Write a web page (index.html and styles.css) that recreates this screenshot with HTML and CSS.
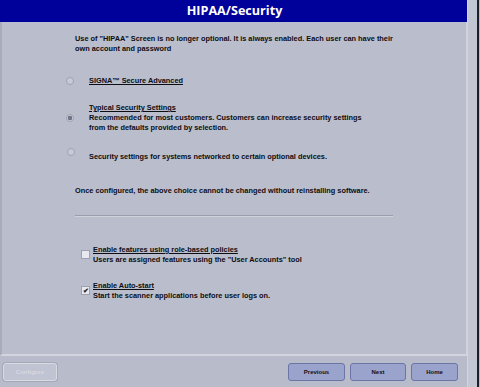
FILE: index.html
```html
<!DOCTYPE html>
<html>
<head>
<meta charset="utf-8">
<link rel="stylesheet" href="styles.css">
</head>
<body>
<div class="screen">
  <div class="main">
    <div class="title">HIPAA/Security</div>
    <div class="panel">
      <p class="intro">Use of "HIPAA" Screen is no longer optional. It is always enabled. Each user can have their<br>own account and password</p>

      <div class="opt opt1">
        <span class="radio"></span>
        <div class="otext"><span class="lbl">SIGNA™ Secure Advanced</span></div>
      </div>

      <div class="opt opt2">
        <span class="radio sel"></span>
        <div class="otext"><span class="lbl">Typical Security Settings</span><br>Recommended for most customers. Customers can increase security settings<br>from the defaults provided by selection.</div>
      </div>

      <div class="opt opt3">
        <span class="radio"></span>
        <div class="otext">Security settings for systems networked to certain optional devices.</div>
      </div>

      <p class="note">Once configured, the above choice cannot be changed without reinstalling software.</p>

      <div class="sep"></div>

      <div class="chk chk1">
        <span class="box"></span>
        <div class="ctext"><span class="lbl">Enable features using role-based policies</span><br>Users are assigned features using the "User Accounts" tool</div>
      </div>

      <div class="chk chk2">
        <span class="box on">✔</span>
        <div class="ctext"><span class="lbl">Enable Auto-start</span><br>Start the scanner applications before user logs on.</div>
      </div>
    </div>
    <div class="footer">
      <button class="btn dis">Configure</button>
      <div class="spacer"></div>
      <button class="btn nav prev">Previous</button>
      <button class="btn nav next">Next</button>
      <button class="btn nav home">Home</button>
    </div>
  </div>
  <div class="side"><div class="strip"></div><div class="line"></div></div>
</div>
</body>
</html>
```
FILE: styles.css
```css
html, body {
  margin: 0;
  padding: 0;
  background: #b8bbca;
}
.screen {
  width: 480px;
  height: 387px;
  display: flex;
  font-family: "Liberation Sans", Arial, sans-serif;
  font-weight: bold;
  font-size: 7.35px;
  color: #0d0d12;
  overflow: hidden;
}
.main {
  width: 467px;
  display: flex;
  flex-direction: column;
}
.title {
  height: 22px;
  background: #00009a;
  color: #fff;
  font-family: "Open Sans", "DejaVu Sans", sans-serif;
  font-size: 12.6px;
  font-weight: bold;
  display: flex;
  align-items: center;
  justify-content: center;
  padding-left: 2px;
}
.panel {
  height: 335px;
  box-sizing: border-box;
  background: #babdcc;
  border-left: 2px solid #a9acbb;
  border-right: 1px solid #d0d2dc;
  border-bottom: 2px solid #d2d4de;
  padding-left: 73px;
  padding-top: 12px;
  line-height: 10px;
}
.intro {
  margin: 0;
}
.opt {
  display: flex;
  margin-left: -9px;
}
.radio {
  width: 6px;
  height: 6px;
  border-radius: 50%;
  background: #c8cad6;
  border: 1px solid #9fa2b2;
  flex: none;
  margin-right: 9px;
}
.radio.sel {
  background: radial-gradient(circle, #707388 0 2px, #c8cad6 2.5px);
}
.lbl {
  text-decoration: underline;
}
.opt1 {
  margin-top: 22px;
  align-items: center;
}
.opt2 {
  margin-top: 17px;
}
.opt2 .radio {
  margin-top: 11px;
}
.opt3 {
  margin-top: 19px;
}
.opt3 .radio {
  margin-top: -4px;
  margin-left: 1px;
  margin-right: 8px;
}
.otext {
  margin-left: 6px;
}
.note {
  margin: 24px 0 0 0;
}
.sep {
  width: 318px;
  height: 1px;
  background: #9a9dae;
  border-bottom: 1px solid #cfd1db;
  margin-top: 19px;
}
.chk {
  display: flex;
  align-items: center;
  margin-left: 6px;
}
.chk1 {
  margin-top: 28px;
}
.chk2 {
  margin-top: 16px;
}
.box {
  width: 7px;
  height: 7px;
  background: #e8e9ef;
  border: 1px solid #9ea1b1;
  flex: none;
  margin-right: 3px;
  font-size: 7px;
  line-height: 7px;
  text-align: center;
  color: #222;
}
.footer {
  height: 30px;
  display: flex;
  align-items: center;
  padding: 0 9px 0 3px;
  gap: 5px;
  margin-top: 1px;
}
.spacer {
  flex: 1;
}
.btn {
  height: 18px;
  border-radius: 3px;
  font-family: "Liberation Sans", Arial, sans-serif;
  font-weight: bold;
  font-size: 6px;
  padding: 0;
  margin: 0;
}
.btn.dis {
  width: 54px;
  background: #c0c3d1;
  border: 1px solid #d9dbe4;
  box-shadow: 0 0 0 1px #a6a9b8;
  color: #d6d8e2;
}
.btn.nav {
  background: #9aa3cc;
  border: 1px solid #6c76a6;
  color: #0f0f1e;
}
.prev { width: 57px; }
.next { width: 56px; }
.home { width: 47px; }
.side {
  display: flex;
  width: 13px;
}
.strip {
  width: 9px;
  background: #c3c6d3;
  border-left: 1px solid #d2d4de;
}
.line {
  width: 2px;
  background: #1c1e2c;
}
```
